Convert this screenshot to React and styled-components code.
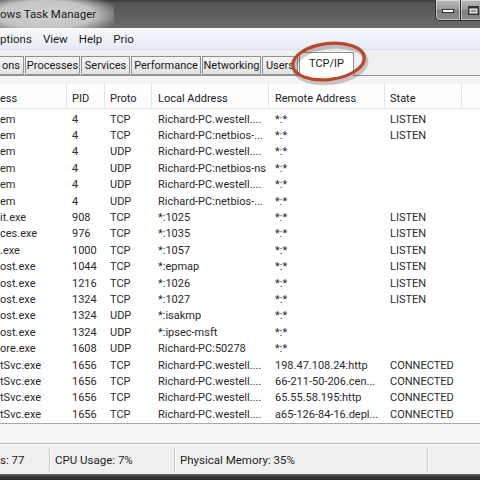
import React from "react";
import styled, { createGlobalStyle } from "styled-components";

const Global = createGlobalStyle`
  html, body { margin: 0; padding: 0; background: #f0f0f0; overflow: hidden; }
  body { font-family: Roboto, "Liberation Sans", sans-serif; font-size: 11px; color: #2a2a2a; }
`;

const Window = styled.div`
  position: relative;
  width: 480px;
  height: 480px;
  display: flex;
  flex-direction: column;
  overflow: hidden;
`;

const TitleBar = styled.div`
  height: 28px;
  flex: none;
  display: flex;
  align-items: flex-start;
  justify-content: space-between;
  background: linear-gradient(to bottom, #3a3a3a 0, #545454 3px, #606060 60%, #6c6c6c 100%);
`;

const TitleText = styled.div`
  height: 28px;
  display: flex;
  align-items: center;
  padding: 0 18px 0 0;
  font-size: 11.5px;
  color: #1c1c1c;
  background: radial-gradient(ellipse 68% 80% at 40% 52%, #d0d0d0 0, #c4c4c4 62%, rgba(170,170,170,0) 100%);
`;

const WinButtons = styled.div`
  display: flex;
  margin-right: -6px;
`;

const WinButton = styled.div`
  width: ${p => p.w}px;
  height: 21px;
  box-sizing: border-box;
  border: 1px solid #2f2f2f;
  border-top: none;
  border-radius: ${p => (p.first ? "0 0 0 5px" : "0")};
  margin-left: -1px;
  background: linear-gradient(to bottom, #b9b9b9 0, #9c9c9c 45%, #7d7d7d 55%, #8e8e8e 100%);
  box-shadow: inset 0 0 0 1px rgba(255,255,255,0.45);
  display: flex;
  align-items: center;
  justify-content: center;
`;

const MenuBar = styled.div`
  height: 21px;
  flex: none;
  display: flex;
  align-items: center;
  background: linear-gradient(to bottom, #f8fafd 0, #eef2f8 50%, #e6ebf3 100%);
  border-bottom: 1px solid #d9dee7;
  gap: 11px;
  font-size: 11.5px;
  color: #1a1a1a;
`;

const MenuItem = styled.span``;

const TabStrip = styled.div`
  height: 25px;
  flex: none;
  display: flex;
  align-items: flex-end;
  background: #f0f0f0;
  position: relative;
  z-index: 1;
`;

const Tab = styled.div`
  width: ${p => p.w}px;
  height: ${p => (p.active ? 24 : 19)}px;
  box-sizing: border-box;
  margin-right: 1px;
  margin-bottom: ${p => (p.active ? -1 : 0)}px;
  border: 1px solid #8e9196;
  border-bottom: ${p => (p.active ? "none" : "1px solid #8e9196")};
  border-left: ${p => (p.noLeft ? "none" : "1px solid #8e9196")};
  background: ${p => (p.active ? "#ffffff" : "linear-gradient(to bottom, #f3f3f3, #e3e3e3)")};
  display: flex;
  align-items: center;
  justify-content: ${p => (p.start ? "flex-end" : "center")};
  padding: ${p => (p.start ? "0 3px 0 0" : "0")};
  padding-bottom: ${p => (p.active ? "3px" : "0")};
  font-size: 11px;
  white-space: nowrap;
  color: #1a1a1a;
`;

const Panel = styled.div`
  flex: none;
  height: 368px;
  box-sizing: border-box;
  border-top: 1px solid #8e9196;
  background: #f4f4f4;
  padding: 8px 0 19px 0;
  display: flex;
`;

const ListView = styled.div`
  flex: 1;
  background: #ffffff;
  border-bottom: 1px solid #a8a8a8;
  display: flex;
  flex-direction: column;
`;

const HeaderRow = styled.div`
  height: 25px;
  box-sizing: border-box;
  padding-top: 4px;
  display: flex;
  background: linear-gradient(to bottom, #ffffff, #fbfbfc);
  border-bottom: 1px solid #e4e6ea;
  font-size: 11px;
  color: #222;
`;

const HeaderCell = styled.div`
  width: ${p => p.w}px;
  flex: ${p => (p.w ? "none" : "1")};
  box-sizing: border-box;
  padding-left: ${p => p.pad}px;
  display: flex;
  align-items: center;
  margin-top: -4px;
  padding-top: 4px;
  border-right: ${p => (p.w ? "1px solid #e2e4e8" : "none")};
`;

const Rows = styled.div`
  padding-top: 2px;
  display: flex;
  flex-direction: column;
`;

const Row = styled.div`
  height: 16.4px;
  display: flex;
  align-items: center;
  font-size: 11px;
  color: #2a2a2a;
`;

const Cell = styled.div`
  width: ${p => p.w}px;
  flex: none;
  box-sizing: border-box;
  padding-left: ${p => p.pad}px;
  white-space: nowrap;
  overflow: hidden;
`;

const StatusBar = styled.div`
  height: 31px;
  flex: none;
  box-sizing: border-box;
  border-top: 1px solid #b8b8b8;
  box-shadow: inset 0 1px 0 #ffffff;
  background: #f0f0f0;
  display: flex;
  align-items: stretch;
  padding: 4px 0 2px;
  font-size: 11.5px;
  color: #1e1e1e;
`;

const StatusPane = styled.div`
  width: ${p => p.w}px;
  flex: ${p => (p.w ? "none" : "1")};
  box-sizing: border-box;
  padding-left: ${p => p.pad}px;
  display: flex;
  align-items: center;
  border-right: ${p => (p.w ? "1px solid #c9c9c9" : "none")};
  box-shadow: ${p => (p.w ? "1px 0 0 #ffffff" : "none")};
`;

const BottomFrame = styled.div`
  flex: 1;
  background: linear-gradient(to bottom, #6a6a6a, #3a3a3a 40%, #2a2a2a);
`;

const Annotation = styled.svg`
  position: absolute;
  left: 280px;
  top: 34px;
  width: 100px;
  height: 56px;
  z-index: 5;
  pointer-events: none;
`;

const cols = [
  { w: 67, pad: 0 },
  { w: 38, pad: 5 },
  { w: 47, pad: 5 },
  { w: 117, pad: 6 },
  { w: 116, pad: 6 },
  { w: 77, pad: 5 },
  { w: 0, pad: 0 },
];

const headers = ["ess", "PID", "Proto", "Local Address", "Remote Address", "State", ""];

const W = "Richard-PC.westell....";
const N = "Richard-PC:netbios-...";
const data = [
  ["em", "4", "TCP", W, "*:*", "LISTEN"],
  ["em", "4", "TCP", N, "*:*", "LISTEN"],
  ["em", "4", "UDP", W, "*:*", ""],
  ["em", "4", "UDP", "Richard-PC:netbios-ns", "*:*", ""],
  ["em", "4", "UDP", W, "*:*", ""],
  ["em", "4", "UDP", N, "*:*", ""],
  ["it.exe", "908", "TCP", "*:1025", "*:*", "LISTEN"],
  ["ces.exe", "976", "TCP", "*:1035", "*:*", "LISTEN"],
  [".exe", "1000", "TCP", "*:1057", "*:*", "LISTEN"],
  ["ost.exe", "1044", "TCP", "*:epmap", "*:*", "LISTEN"],
  ["ost.exe", "1216", "TCP", "*:1026", "*:*", "LISTEN"],
  ["ost.exe", "1324", "TCP", "*:1027", "*:*", "LISTEN"],
  ["ost.exe", "1324", "UDP", "*:isakmp", "*:*", ""],
  ["ost.exe", "1324", "UDP", "*:ipsec-msft", "*:*", ""],
  ["ore.exe", "1608", "UDP", "Richard-PC:50278", "*:*", ""],
  ["tSvc.exe", "1656", "TCP", W, "198.47.108.24:http", "CONNECTED"],
  ["tSvc.exe", "1656", "TCP", W, "66-211-50-206.cen...", "CONNECTED"],
  ["tSvc.exe", "1656", "TCP", W, "65.55.58.195:http", "CONNECTED"],
  ["tSvc.exe", "1656", "TCP", W, "a65-126-84-16.depl...", "CONNECTED"],
];

const tabs = [
  { label: "ons", w: 24, start: true, noLeft: true },
  { label: "Processes", w: 55 },
  { label: "Services", w: 49 },
  { label: "Performance", w: 70 },
  { label: "Networking", w: 59 },
  { label: "Users", w: 36 },
  { label: "TCP/IP", w: 55, active: true },
];

export default function App() {
  return (
    <>
      <Global />
      <Window>
        <TitleBar>
          <TitleText>ows Task Manager</TitleText>
          <WinButtons>
            <WinButton w={26} first>
              <svg width="12" height="6" viewBox="0 0 12 6">
                <rect x="0.5" y="2.5" width="11" height="3" fill="#fff" stroke="#333" />
              </svg>
            </WinButton>
            <WinButton w={26}>
              <svg width="11" height="9" viewBox="0 0 11 9">
                <rect x="0.5" y="0.5" width="10" height="8" fill="#333" stroke="#333" />
                <rect x="2" y="3" width="7" height="4" fill="#9a9a9a" stroke="#fff" strokeWidth="1" />
              </svg>
            </WinButton>
          </WinButtons>
        </TitleBar>
        <MenuBar>
          <MenuItem>ptions</MenuItem>
          <MenuItem>View</MenuItem>
          <MenuItem>Help</MenuItem>
          <MenuItem>Prio</MenuItem>
        </MenuBar>
        <TabStrip>
          {tabs.map((t, i) => (
            <Tab key={i} w={t.w} active={t.active} start={t.start} noLeft={t.noLeft}>
              {t.label}
            </Tab>
          ))}
        </TabStrip>
        <Panel>
          <ListView>
            <HeaderRow>
              {headers.map((h, i) => (
                <HeaderCell key={i} w={cols[i].w} pad={cols[i].pad}>{h}</HeaderCell>
              ))}
            </HeaderRow>
            <Rows>
              {data.map((r, ri) => (
                <Row key={ri}>
                  {r.map((c, ci) => (
                    <Cell key={ci} w={cols[ci].w} pad={cols[ci].pad}>{c}</Cell>
                  ))}
                </Row>
              ))}
            </Rows>
          </ListView>
        </Panel>
        <StatusBar>
          <StatusPane w={50} pad={0}>s: 77</StatusPane>
          <StatusPane w={125} pad={5}>CPU Usage: 7%</StatusPane>
          <StatusPane w={253} pad={5}>Physical Memory: 35%</StatusPane>
          <StatusPane pad={0} />
        </StatusBar>
        <BottomFrame />
        <Annotation viewBox="0 0 100 56">
          <ellipse cx="49" cy="29" rx="36" ry="18" fill="none" stroke="rgba(80,40,30,0.25)" strokeWidth="5" transform="rotate(-7 49 29) translate(1 1.5)" />
          <ellipse cx="48.5" cy="27.5" rx="36" ry="18" fill="none" stroke="#b8482c" strokeWidth="3.2" transform="rotate(-7 48.5 27.5)" />
        </Annotation>
      </Window>
    </>
  );
}
